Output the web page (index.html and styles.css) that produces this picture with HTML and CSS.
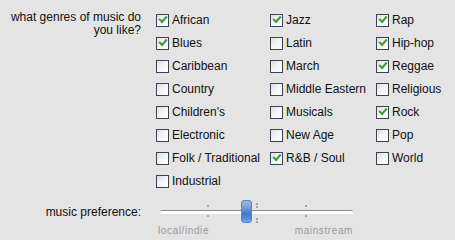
FILE: index.html
```html
<!DOCTYPE html>
<html>
<head>
<meta charset="utf-8">
<link rel="stylesheet" href="styles.css">
</head>
<body>
<div class="form">
  <div class="row genres">
    <div class="label">what genres of music do<br>you like?</div>
    <div class="options">
      <label class="opt"><span class="cb on"></span>African</label>
      <label class="opt"><span class="cb on"></span>Jazz</label>
      <label class="opt"><span class="cb on"></span>Rap</label>
      <label class="opt"><span class="cb on"></span>Blues</label>
      <label class="opt"><span class="cb"></span>Latin</label>
      <label class="opt"><span class="cb on"></span>Hip-hop</label>
      <label class="opt"><span class="cb"></span>Caribbean</label>
      <label class="opt"><span class="cb"></span>March</label>
      <label class="opt"><span class="cb on"></span>Reggae</label>
      <label class="opt"><span class="cb"></span>Country</label>
      <label class="opt"><span class="cb"></span>Middle Eastern</label>
      <label class="opt"><span class="cb"></span>Religious</label>
      <label class="opt"><span class="cb"></span>Children's</label>
      <label class="opt"><span class="cb"></span>Musicals</label>
      <label class="opt"><span class="cb on"></span>Rock</label>
      <label class="opt"><span class="cb"></span>Electronic</label>
      <label class="opt"><span class="cb"></span>New Age</label>
      <label class="opt"><span class="cb"></span>Pop</label>
      <label class="opt"><span class="cb"></span>Folk / Traditional</label>
      <label class="opt"><span class="cb on"></span>R&amp;B / Soul</label>
      <label class="opt"><span class="cb"></span>World</label>
      <label class="opt"><span class="cb"></span>Industrial</label>
    </div>
  </div>
  <div class="row pref">
    <div class="label">music preference:</div>
    <div class="slider">
      <div class="track"></div>
      <span class="tick t1"></span>
      <span class="tick t2"></span>
      <span class="tick t3"></span>
      <div class="thumb"></div>
      <div class="scale"><span>local/indie</span><span>mainstream</span></div>
    </div>
  </div>
</div>
</body>
</html>
```
FILE: styles.css
```css
html, body {
  margin: 0;
  padding: 0;
  background: #e4e4e4;
}
body {
  font-family: "Liberation Sans", Arial, sans-serif;
  font-size: 12px;
  color: #111;
}
.form {
  padding-top: 8px;
}
.row {
  display: grid;
  grid-template-columns: 141px 1fr;
  column-gap: 15px;
}
.label {
  text-align: right;
  line-height: 13px;
  padding-top: 3px;
}
.options {
  display: grid;
  grid-template-columns: 114px 106px 1fr;
  grid-auto-rows: 23px;
}
.opt {
  display: flex;
  align-items: center;
  gap: 3px;
  white-space: nowrap;
  height: 23px;
}
.cb {
  box-sizing: border-box;
  width: 13px;
  height: 13px;
  border: 1px solid #3a4350;
  background: linear-gradient(135deg, #dcdde2 0%, #f4f4f6 45%, #ffffff 100%);
  flex: none;
  position: relative;
  top: 1px;
}
.cb.on::after {
  content: "";
  position: absolute;
  left: 2px;
  top: 1px;
  width: 6px;
  height: 3px;
  border-left: 2px solid #3a9a3a;
  border-bottom: 2px solid #3a9a3a;
  transform: rotate(-48deg);
  transform-origin: center;
}
.pref {
  margin-top: 8px;
}
.pref .label {
  padding-top: 6px;
}
.slider {
  position: relative;
  width: 196px;
  height: 42px;
  margin-left: 1px;
}
.track {
  position: absolute;
  left: 3px;
  top: 10px;
  width: 193px;
  height: 3px;
  background: #ffffff;
  border-top: 1px solid #8a8a8a;
  border-radius: 2px;
}
.tick {
  position: absolute;
  width: 2px;
  height: 2px;
  background: #a8a8a8;
}
.tick::after {
  content: "";
  position: absolute;
  left: 0;
  top: 10px;
  width: 2px;
  height: 2px;
  background: #a8a8a8;
}
.t1 { left: 50px; top: 5px; }
.t2 { left: 99px; top: 3px; box-shadow: 0 3px 0 #a8a8a8; }
.t2::after { top: 15px; box-shadow: 0 3px 0 #a8a8a8; }
.t3 { left: 148px; top: 5px; }
.thumb {
  position: absolute;
  left: 84px;
  top: 0;
  width: 11px;
  height: 23px;
  border-radius: 4px;
  background: linear-gradient(180deg, #a9c3e6 0%, #6f9ad6 35%, #3f78cf 60%, #5d92e0 85%, #8fb4ea 100%);
  box-shadow: inset 0 0 0 1px #5f86c4;
}
.scale {
  position: absolute;
  left: 1px;
  top: 25px;
  width: 195px;
  display: flex;
  justify-content: space-between;
  font-size: 10px;
  color: #9a9a9a;
  letter-spacing: 0.6px;
}
```
